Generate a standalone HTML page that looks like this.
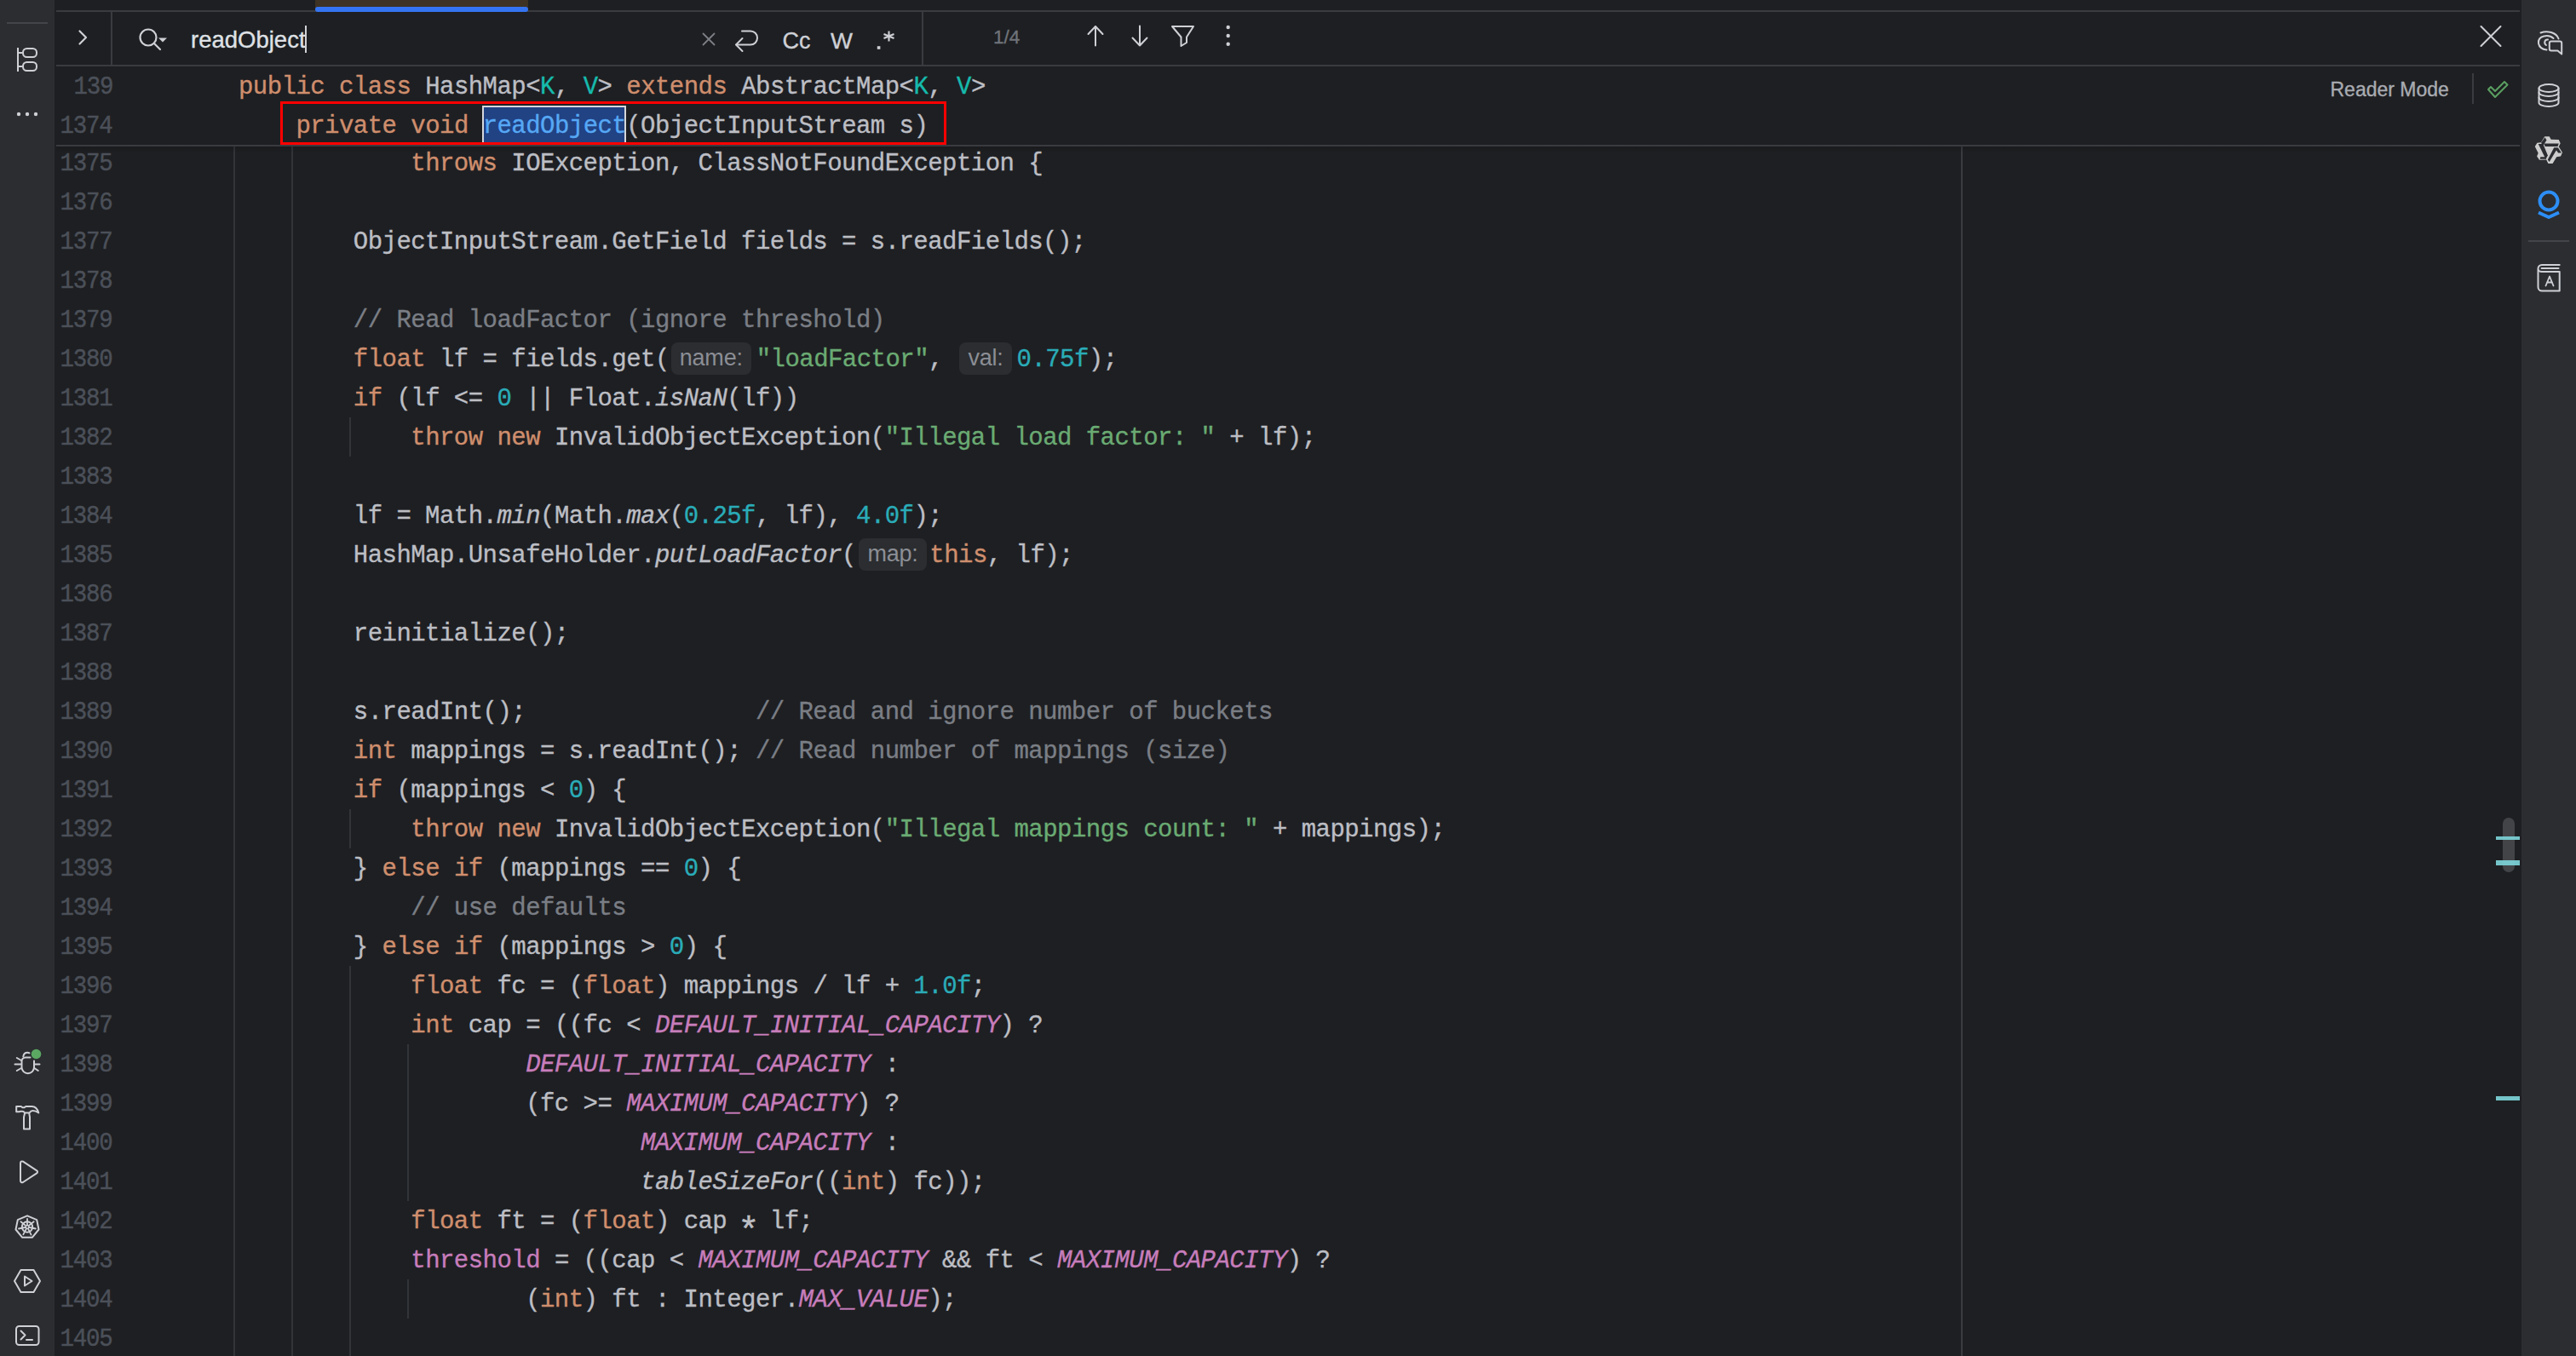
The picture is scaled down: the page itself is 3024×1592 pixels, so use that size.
<!DOCTYPE html>
<html><head><meta charset="utf-8">
<style>
html,body{margin:0;padding:0;}
body{width:3024px;height:1592px;overflow:hidden;position:relative;background:#1e1f22;font-family:"Liberation Mono",monospace;}
.abs{position:absolute;}
.ln{position:absolute;left:0;width:200px;height:46px;}
.no{position:absolute;right:68.19999999999999px;top:1.4px;font-size:29.5px;letter-spacing:-1.3px;transform:scaleX(0.93);transform-origin:100% 50%;line-height:46px;color:#4b5059;white-space:pre;-webkit-text-stroke:0.45px currentColor;}
.cd,.st{position:absolute;left:279.95px;height:46px;font-size:29px;line-height:46px;letter-spacing:-0.5428px;color:#bcbec4;white-space:pre;-webkit-text-stroke:0.35px currentColor;}
.k{color:#cf8e6d;}
.s{color:#6aab73;}
.n{color:#2aacb8;}
.c{color:#7a7e85;}
.p{color:#c77dbb;font-style:italic;}
.f{color:#c77dbb;}
.i{font-style:italic;}
.t{color:#16baac;}
.hl{color:#56a8f5;}
.hint{display:inline-block;position:relative;letter-spacing:0;margin-left:4px;margin-right:4px;vertical-align:top;}
.hint b{display:inline-block;font-weight:normal;font-family:"Liberation Sans",sans-serif;font-size:27px;line-height:36px;height:38px;margin-top:0;position:relative;top:-0.8px;padding:0;text-align:center;background:#2b2d30;color:#8b8e95;border-radius:8px;letter-spacing:-0.2px;-webkit-text-stroke:0;}
.gd{position:absolute;width:2px;background:#313438;}
.hr{position:absolute;height:2px;background:#393b40;}
.ui{position:absolute;font-family:"Liberation Sans",sans-serif;white-space:pre;-webkit-text-stroke:0.35px currentColor;}
</style></head><body>
<!-- sidebars -->
<div class="abs" style="left:0;top:0;width:64px;height:1592px;background:#2b2d30"></div>
<div class="abs" style="left:2960px;top:0;width:64px;height:1592px;background:#2b2d30"></div>

<!-- editor code -->
<div class="gd" style="left:274px;top:172px;height:1420px"></div>
<div class="gd" style="left:342px;top:172px;height:1420px"></div>
<div class="gd" style="left:410px;top:490px;height:46px"></div>
<div class="gd" style="left:410px;top:950px;height:46px"></div>
<div class="gd" style="left:410px;top:1134px;height:458px"></div>
<div class="gd" style="left:478px;top:1226px;height:184px"></div>
<div class="gd" style="left:478px;top:1502px;height:46px"></div>
<div class="abs" style="left:2302px;top:172px;width:2px;height:1420px;background:#393b40"></div>
<div class="ln" style="top:168px"><span class="no">1375</span></div>
<div class="cd" style="top:170.2px">            <span class="k">throws</span> IOException, ClassNotFoundException {</div>
<div class="ln" style="top:214px"><span class="no">1376</span></div>
<div class="ln" style="top:260px"><span class="no">1377</span></div>
<div class="cd" style="top:262.2px">        ObjectInputStream.GetField fields = s.readFields();</div>
<div class="ln" style="top:306px"><span class="no">1378</span></div>
<div class="ln" style="top:352px"><span class="no">1379</span></div>
<div class="cd" style="top:354.2px">        <span class="c">// Read loadFactor (ignore threshold)</span></div>
<div class="ln" style="top:398px"><span class="no">1380</span></div>
<div class="cd" style="top:400.2px">        <span class="k">float</span> lf = fields.get(<span class="hint" style="margin-left:2.25px;margin-right:6.2px"><b style="width:93.5px">name:</b></span><span class="s">"loadFactor"</span>, <span class="hint" style="margin-left:2.25px;margin-right:5.5px"><b style="width:62px">val:</b></span><span class="n">0.75f</span>);</div>
<div class="ln" style="top:444px"><span class="no">1381</span></div>
<div class="cd" style="top:446.2px">        <span class="k">if</span> (lf &lt;= <span class="n">0</span> || Float.<span class="i">isNaN</span>(lf))</div>
<div class="ln" style="top:490px"><span class="no">1382</span></div>
<div class="cd" style="top:492.2px">            <span class="k">throw</span> <span class="k">new</span> InvalidObjectException(<span class="s">"Illegal load factor: "</span> + lf);</div>
<div class="ln" style="top:536px"><span class="no">1383</span></div>
<div class="ln" style="top:582px"><span class="no">1384</span></div>
<div class="cd" style="top:584.2px">        lf = Math.<span class="i">min</span>(Math.<span class="i">max</span>(<span class="n">0.25f</span>, lf), <span class="n">4.0f</span>);</div>
<div class="ln" style="top:628px"><span class="no">1385</span></div>
<div class="cd" style="top:630.2px">        HashMap.UnsafeHolder.<span class="i">putLoadFactor</span>(<span class="hint" style="margin-left:3.1px;margin-right:3.3px"><b style="width:80px">map:</b></span><span class="k">this</span>, lf);</div>
<div class="ln" style="top:674px"><span class="no">1386</span></div>
<div class="ln" style="top:720px"><span class="no">1387</span></div>
<div class="cd" style="top:722.2px">        reinitialize();</div>
<div class="ln" style="top:766px"><span class="no">1388</span></div>
<div class="ln" style="top:812px"><span class="no">1389</span></div>
<div class="cd" style="top:814.2px">        s.readInt();                <span class="c">// Read and ignore number of buckets</span></div>
<div class="ln" style="top:858px"><span class="no">1390</span></div>
<div class="cd" style="top:860.2px">        <span class="k">int</span> mappings = s.readInt(); <span class="c">// Read number of mappings (size)</span></div>
<div class="ln" style="top:904px"><span class="no">1391</span></div>
<div class="cd" style="top:906.2px">        <span class="k">if</span> (mappings &lt; <span class="n">0</span>) {</div>
<div class="ln" style="top:950px"><span class="no">1392</span></div>
<div class="cd" style="top:952.2px">            <span class="k">throw</span> <span class="k">new</span> InvalidObjectException(<span class="s">"Illegal mappings count: "</span> + mappings);</div>
<div class="ln" style="top:996px"><span class="no">1393</span></div>
<div class="cd" style="top:998.2px">        } <span class="k">else</span> <span class="k">if</span> (mappings == <span class="n">0</span>) {</div>
<div class="ln" style="top:1042px"><span class="no">1394</span></div>
<div class="cd" style="top:1044.2px">            <span class="c">// use defaults</span></div>
<div class="ln" style="top:1088px"><span class="no">1395</span></div>
<div class="cd" style="top:1090.2px">        } <span class="k">else</span> <span class="k">if</span> (mappings &gt; <span class="n">0</span>) {</div>
<div class="ln" style="top:1134px"><span class="no">1396</span></div>
<div class="cd" style="top:1136.2px">            <span class="k">float</span> fc = (<span class="k">float</span>) mappings / lf + <span class="n">1.0f</span>;</div>
<div class="ln" style="top:1180px"><span class="no">1397</span></div>
<div class="cd" style="top:1182.2px">            <span class="k">int</span> cap = ((fc &lt; <span class="p">DEFAULT_INITIAL_CAPACITY</span>) ?</div>
<div class="ln" style="top:1226px"><span class="no">1398</span></div>
<div class="cd" style="top:1228.2px">                    <span class="p">DEFAULT_INITIAL_CAPACITY</span> :</div>
<div class="ln" style="top:1272px"><span class="no">1399</span></div>
<div class="cd" style="top:1274.2px">                    (fc &gt;= <span class="p">MAXIMUM_CAPACITY</span>) ?</div>
<div class="ln" style="top:1318px"><span class="no">1400</span></div>
<div class="cd" style="top:1320.2px">                            <span class="p">MAXIMUM_CAPACITY</span> :</div>
<div class="ln" style="top:1364px"><span class="no">1401</span></div>
<div class="cd" style="top:1366.2px">                            <span class="i">tableSizeFor</span>((<span class="k">int</span>) fc));</div>
<div class="ln" style="top:1410px"><span class="no">1402</span></div>
<div class="cd" style="top:1412.2px">            <span class="k">float</span> ft = (<span class="k">float</span>) cap <span style="display:inline-block;transform-origin:50% 13px;transform:translateY(8px) scale(1.45)">*</span> lf;</div>
<div class="ln" style="top:1456px"><span class="no">1403</span></div>
<div class="cd" style="top:1458.2px">            <span class="f">threshold</span> = ((cap &lt; <span class="p">MAXIMUM_CAPACITY</span> &amp;&amp; ft &lt; <span class="p">MAXIMUM_CAPACITY</span>) ?</div>
<div class="ln" style="top:1502px"><span class="no">1404</span></div>
<div class="cd" style="top:1504.2px">                    (<span class="k">int</span>) ft : Integer.<span class="p">MAX_VALUE</span>);</div>
<div class="ln" style="top:1548px"><span class="no">1405</span></div>

<!-- scrollbar -->
<div class="abs" style="left:2938px;top:960px;width:14px;height:64px;border-radius:7px;background:rgba(255,255,255,0.17)"></div>
<div class="abs" style="left:2930px;top:982px;width:28px;height:4px;background:#7cd3d8;opacity:0.92"></div>
<div class="abs" style="left:2930px;top:1010px;width:28px;height:6px;background:#7cd3d8;opacity:0.92"></div>
<div class="abs" style="left:2930px;top:1287px;width:28px;height:5px;background:#7cd3d8;opacity:0.92"></div>

<!-- top area cover: tabs + find bar + sticky -->
<div class="abs" style="left:64px;top:0;width:2896px;height:170px;background:#1e1f22"></div>
<div class="abs" style="left:66px;top:172px;width:2892px;height:8px;background:linear-gradient(rgba(0,0,0,0.14),rgba(0,0,0,0))"></div>
<div class="abs" style="left:370px;top:0;width:250px;height:10px;background:#3d3223"></div>
<div class="hr" style="left:66px;top:12px;width:2892px"></div>
<div class="abs" style="left:370px;top:8px;width:250px;height:6px;border-radius:3px;background:#3574f0"></div>
<div class="hr" style="left:66px;top:76px;width:2892px"></div>
<div class="abs" style="left:130px;top:14px;width:2px;height:62px;background:#393b40"></div>
<div class="abs" style="left:1082px;top:14px;width:2px;height:62px;background:#393b40"></div>
<div class="hr" style="left:66px;top:170px;width:2892px"></div>


<svg style="position:absolute;left:0;top:0" width="3024" height="80" viewBox="0 0 3024 80" fill="none" stroke="#ced0d6" stroke-width="2" stroke-linecap="round" stroke-linejoin="round">
  <!-- chevron -->
  <path d="M93.5 36.5L101 44L93.5 51.5" stroke-width="2.2"/>
  <!-- search -->
  <circle cx="174" cy="44" r="9.5" stroke-width="2.2"/>
  <path d="M181 51L188 58" stroke-width="2.2"/>
  <path d="M186 44.5H196L191 49.5Z" fill="#ced0d6" stroke="none"/>
  <!-- clear x -->
  <path d="M825.5 39.5L838.5 52.5M838.5 39.5L825.5 52.5" stroke="#7c7f86" stroke-width="1.8"/>
  <!-- wrap/enter -->
  <path d="M871 36.5H881C885.5 36.5 889 40 889 44.5C889 49 885.5 52.5 881 52.5H864.5"/>
  <path d="M871.5 45L864 52.5L871.5 60"/>
  <!-- .* -->
  <rect x="1029.8" y="54.2" width="3.6" height="3.6" fill="#ced0d6" stroke="none"/>
  <path d="M1043.5 36.5V48.5M1037.5 40L1049.5 45M1049.5 40L1037.5 45" stroke-width="2.1" stroke-linecap="butt"/>
  <!-- up -->
  <path d="M1286 31V53.5M1277.5 40L1286 31L1294.5 40"/>
  <!-- down -->
  <path d="M1338 30.5V53.5M1329.5 44.5L1338 53.5L1346.5 44.5"/>
  <!-- filter -->
  <path d="M1376 31H1401L1393 43.5V50L1386.5 54V43.5Z"/>
  <!-- more -->
  <circle cx="1441.7" cy="32" r="2.2" fill="#ced0d6" stroke="none"/>
  <circle cx="1441.7" cy="42" r="2.2" fill="#ced0d6" stroke="none"/>
  <circle cx="1441.7" cy="51.7" r="2.2" fill="#ced0d6" stroke="none"/>
  <!-- close -->
  <path d="M2912.5 31L2935.5 54M2935.5 31L2912.5 54" stroke-width="2"/>
</svg>

<div class="ui" style="left:224px;top:28.5px;font-size:27.5px;line-height:36px;color:#dfe1e5">readObject</div>
<div class="abs" style="left:358px;top:30px;width:2px;height:32px;background:#cfd1d6"></div>
<div class="ui" style="left:918.5px;top:30.5px;font-size:27px;line-height:34px;color:#ced0d6">Cc</div>
<div class="ui" style="left:974.5px;top:30.5px;font-size:25px;line-height:34px;color:#ced0d6;transform:scaleX(1.1);transform-origin:0 0">W</div>
<div class="ui" style="left:1166px;top:28.5px;font-size:22.5px;line-height:30px;color:#6f737a">1/4</div>

<!-- sticky lines -->
<div class="ln" style="top:78px"><span class="no">139</span></div>
<div class="st" style="top:80.2px"><span class="k">public</span> <span class="k">class</span> HashMap&lt;<span class="t">K</span>, <span class="t">V</span>&gt; <span class="k">extends</span> AbstractMap&lt;<span class="t">K</span>, <span class="t">V</span>&gt;</div>
<div class="abs" style="left:566px;top:124px;width:169px;height:46px;box-sizing:border-box;border:2px solid #d5d7db;border-bottom:none;background:#214283"></div>
<div class="ln" style="top:124px"><span class="no">1374</span></div>
<div class="st" style="top:126.2px">    <span class="k">private</span> <span class="k">void</span> <span class="hl">readObject</span>(ObjectInputStream s)</div>
<div class="abs" style="left:329px;top:119px;width:782px;height:51px;box-sizing:border-box;border:3px solid #ff0000"></div>

<div class="ui" style="left:2735.5px;top:89.5px;font-size:23px;line-height:30px;color:#a9acb2">Reader Mode</div>
<div class="abs" style="left:2902px;top:86px;width:2px;height:36px;background:#393b40"></div>
<svg class="abs" style="left:2900px;top:80px" width="60" height="50" viewBox="2900 80 60 50"><path d="M2921 105L2924 102L2929 107L2940 96L2943.5 99.5L2929 114Z" fill="none" stroke="#5a9f62" stroke-width="2" stroke-linejoin="round"/></svg>


<div style="position:absolute;left:8px;top:26px;width:48px;height:2px;background:#43454a"></div>
<svg style="position:absolute;left:0;top:0" width="64" height="1592" viewBox="0 0 64 1592" fill="none" stroke="#ced0d6" stroke-width="2" stroke-linecap="round" stroke-linejoin="round">
  <!-- structure -->
  <path d="M21 56V84M21 62H26M21 78H26" stroke-linecap="butt"/>
  <rect x="27" y="57" width="16" height="10" rx="4.5"/>
  <rect x="27" y="73" width="16" height="10" rx="4.5"/>
  <!-- dots -->
  <circle cx="22" cy="134" r="2.2" fill="#ced0d6" stroke="none"/>
  <circle cx="32" cy="134" r="2.2" fill="#ced0d6" stroke="none"/>
  <circle cx="42" cy="134" r="2.2" fill="#ced0d6" stroke="none"/>
  <!-- bug -->
  <path d="M35.5 1241.5H30C27.5 1241.5 25.5 1243.5 25.5 1246V1253A7.25 7.25 0 0 0 40 1253V1245.5"/>
  <path d="M27.3 1240.3C27.8 1237.3 30 1235.8 32.3 1235.8C33.2 1235.8 34 1236 34.5 1236.3"/>
  <path d="M19.8 1242L25 1245M17.5 1249.6H25M19.8 1257L25 1254M40.5 1249.6H46.5M40.3 1254L44.8 1257"/>
  <circle cx="42.5" cy="1237.5" r="5.8" fill="#5ba863" stroke="none"/>
  <!-- hammer -->
  <path d="M19.2 1299H24.5C25.5 1299 26 1300.3 27 1300.3H28C29 1300.3 29.5 1299 30.5 1299H37.5C41 1299 44 1302 45.3 1306.5C43.5 1305.2 41 1304 38.5 1304C36.5 1304 35.5 1305 34.5 1306.5H29C28 1305 27 1304.8 26 1304.8H24.5C23.5 1304.8 23 1305.3 22 1305.3H19.2Z"/>
  <path d="M29 1306.8C29 1309 28 1310 28 1312V1325.5H35V1312C35 1310 34.3 1309 34.3 1306.8"/>
  <!-- run -->
  <path d="M24 1365.5C24 1363.8 25.5 1362.9 27 1363.7L43.2 1374.3C44.3 1375 44.3 1376.7 43.2 1377.4L27 1388C25.5 1388.8 24 1387.9 24 1386.2Z"/>
  <!-- kubernetes -->
  <path d="M32 1427.3L43.2 1432.2L45.5 1443.5L37.8 1452.8H26.2L18.5 1443.5L20.8 1432.2Z"/>
  <circle cx="32" cy="1440.5" r="6.2" stroke-width="2"/>
  <path d="M32 1440.5V1431M32 1440.5L39.7 1434.3M32 1440.5L41.8 1442.5M32 1440.5L36.5 1449.6M32 1440.5L27.3 1449.3M32 1440.5L22 1442.5M32 1440.5L24.4 1434.3" stroke-width="1.8"/>
  <circle cx="32" cy="1440.5" r="1.1" fill="#2b2d30" stroke="none"/>
  <!-- hex play -->
  <path d="M17 1504L24.5 1491H39.5L47 1504L39.5 1517H24.5Z"/>
  <path d="M29 1498.5L37.5 1504L29 1509.5Z"/>
  <!-- terminal -->
  <rect x="19" y="1557" width="26.5" height="22" rx="3.5"/>
  <path d="M24.5 1562.5L29.5 1567.5L24.5 1572.5M31 1573H38"/>
</svg>


<div style="position:absolute;left:2968px;top:282px;width:48px;height:2px;background:#43454a"></div>
<svg style="position:absolute;left:2960px;top:0" width="64" height="400" viewBox="2960 0 64 400" fill="none" stroke="#ced0d6" stroke-width="2" stroke-linecap="round" stroke-linejoin="round">
  <!-- ai chat -->
  <path d="M2982.5 38.5C2990 35.5 3001 38 3003.5 45.5"/>
  <path d="M2997.5 45C2992 40 2979 41.5 2980 51C2981 56 2985 58 2989.5 58.5"/>
  <path d="M2991 46.5C2987 46 2986 51 2989 53"/>
  <path d="M2995 48.5H3005C3006.3 48.5 3007.2 49.4 3007.2 50.7V63.5L3002.5 59.5H2995C2993.8 59.5 2992.8 58.5 2992.8 57.3V50.7C2992.8 49.4 2993.8 48.5 2995 48.5Z"/>
  <!-- database -->
  <ellipse cx="2992" cy="103.5" rx="11.5" ry="4.5"/>
  <path d="M2980.5 103.5V120.5C2980.5 123 2985.5 125 2992 125C2998.5 125 3003.5 123 3003.5 120.5V103.5"/>
  <path d="M2980.5 108.5C2980.5 111 2985.5 113 2992 113C2998.5 113 3003.5 111 3003.5 108.5"/>
  <path d="M2980.5 114.5C2980.5 117 2985.5 119 2992 119C2998.5 119 3003.5 117 3003.5 114.5"/>
  <!-- qodana-ish -->
  <path d="M2987.2 160.2L2992.7 160.2L2994.7 163.8L3003.8 163.9L3005.7 168.3L3003.8 172.2L3008 179L3006 183.6L3001.2 184.2L2996.6 192L2991.4 192L2989.2 187.5L2981 187.8L2978.1 183.6L2979.7 179.7L2975.8 171.9L2978.4 167.7L2983 167.3Z" fill="#cdcdcd" stroke="none"/>
  <g fill="#2b2d30" stroke="none">
    <path d="M2986.2 168.6L3003.8 168.6L3002.5 171.9L2987.8 171.9Z"/>
    <path d="M2979.7 169L2985.3 169L2990.9 182.5L2988.5 186.8Z"/>
    <path d="M2982.3 184.2L2988.2 184.2L2989.2 186.8L2981.7 186.8Z"/>
    <path d="M2998.2 173.2L3002.8 173.2L2992.7 190.1L2990.8 187.5Z"/>
    <path d="M3000.5 175.8L3002.8 173.2L3007 179.4L3003.1 179.4Z"/>
    <path d="M2987.5 161.2L2989.5 164.4L2985.3 171.2L2983 167.7Z"/>
  </g>
  <!-- blue -->
  <circle cx="2992" cy="236" r="10.5" stroke="#2d8ef5" stroke-width="4"/>
  <path d="M2980 249.5L2992 255L3004 249.5" stroke="#2d8ef5" stroke-width="4" stroke-linecap="butt"/>
  <!-- book A -->
  <path d="M3004.7 311H2984C2981.5 311 2979.5 313 2979.5 315.5V337C2979.5 339.5 2981.5 341.5 2984 341.5H3004.7V319H2983.7C2981.5 319 2979.5 317.5 2979.5 315.5"/>
  <path d="M2983.5 315H3003.5"/>
  <path d="M2988.5 335.5L2993 324.5L2997.5 335.5M2990 331.5H2996" stroke-width="1.8"/>
</svg>

</body></html>
